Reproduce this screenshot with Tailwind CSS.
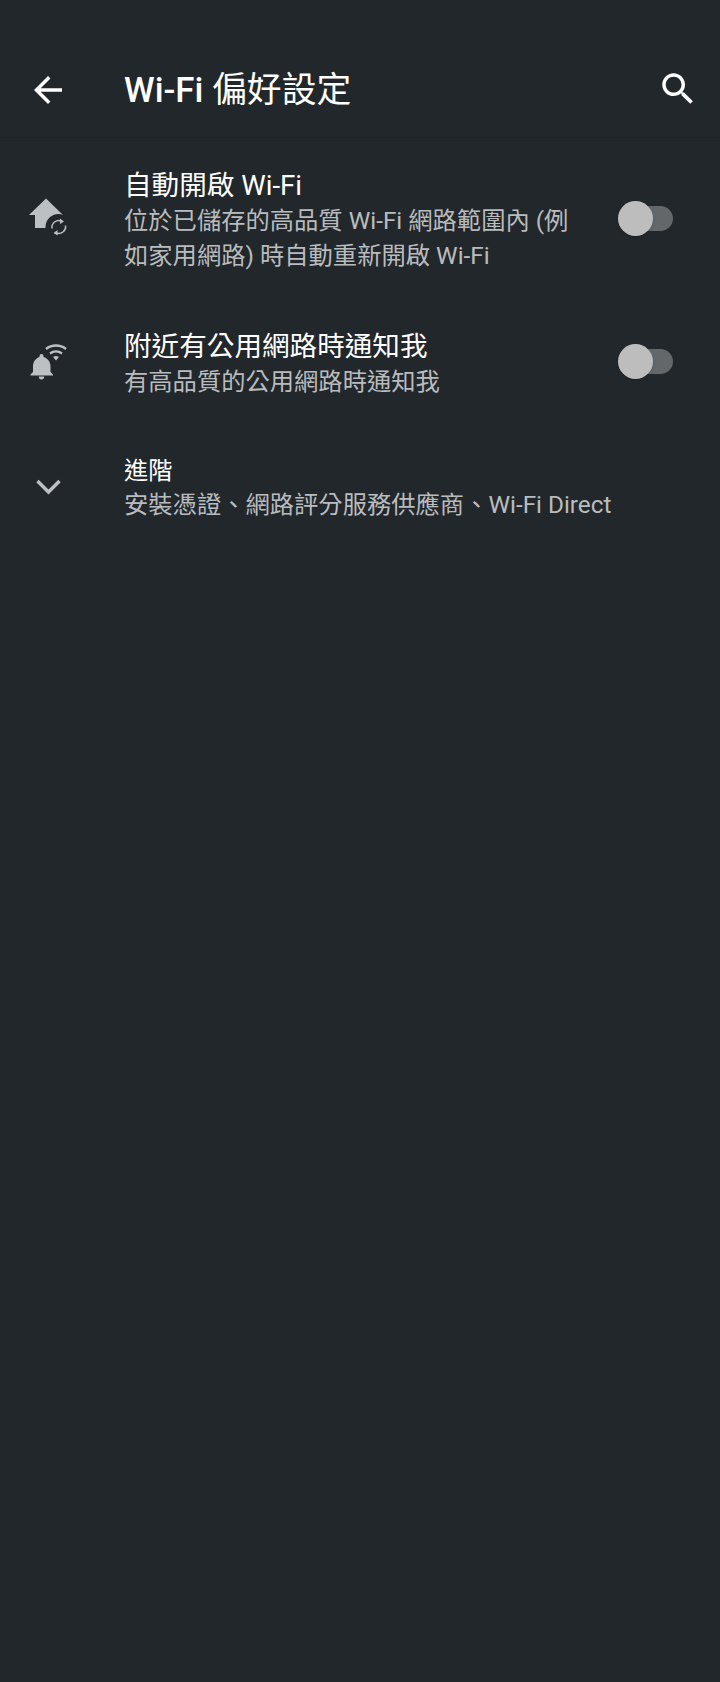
<!DOCTYPE html>
<html lang="zh-Hant">
<head>
<meta charset="utf-8">
<script src="https://cdn.jsdelivr.net/npm/@tailwindcss/browser@4"></script>
</head>
<body class="m-0">
<div class="w-[720px] h-[1682px] overflow-hidden bg-[#22272b] font-['Roboto','Noto_Sans_CJK_TC',sans-serif]">
  <header class="pt-[40px]">
    <div class="h-[98px] flex items-center border-b border-[#1f2427]">
      <div class="w-[124px] shrink-0 pl-[27px] mt-[2px]">
        <svg class="w-[42px] h-[42px] block" viewBox="0 0 24 24" fill="#fff"><path d="M20 11H7.83l5.59-5.59L12 4l-8 8 8 8 1.41-1.41L7.83 13H20v-2z"/></svg>
      </div>
      <h1 class="flex-1 text-[34.8px] leading-[44px] font-medium text-white whitespace-nowrap mt-[3px]"><span class="font-medium">Wi-Fi</span> <span class="font-normal">偏好設定</span></h1>
      <div class="w-[42px] mr-[21px] shrink-0">
        <svg class="w-[42px] h-[42px] block" viewBox="0 0 24 24" fill="#fff"><path d="M15.5 14h-.79l-.28-.27C15.41 12.59 16 11.11 16 9.5 16 5.91 13.09 3 9.5 3S3 5.91 3 9.5 5.91 16 9.5 16c1.61 0 3.09-.59 4.23-1.57l.27.28v.79l5 4.99L20.49 19l-4.99-5zm-6 0C7.01 14 5 11.99 5 9.5S7.01 5 9.5 5 14 7.01 14 9.5 11.99 14 9.5 14z"/></svg>
      </div>
    </div>
  </header>

  <main>
    <div class="flex items-center pt-[30px] pb-[24px]">
      <div class="w-[124px] shrink-0 pl-[20px] -mt-[6px]">
        <svg class="w-[60px] h-[60px] block" viewBox="0 0 60 60">
          <path d="M26 10.500 L9 27 H15 V40 H33 V27 H43 Z" fill="#bdc0c2"/>
          <circle cx="38.500" cy="39" r="13" fill="#22272b"/>
          <g transform="translate(0.500 -3)">
            <path d="M31.500 43.500 A7 7 0 0 1 41 36 M45 40.500 A7 7 0 0 1 35.500 48" fill="none" stroke="#bdc0c2" stroke-width="1.500"/>
            <path d="M39.500 33.500 L43.500 36.500 L39.500 39 Z M37 45 L33 48 L37 50.500 Z" fill="#bdc0c2"/>
          </g>
        </svg>
      </div>
      <div class="w-[453px] shrink-0">
        <div class="text-[27.6px] leading-[35px] text-white">自動開啟 Wi-Fi</div>
        <div class="text-[24.3px] leading-[35px] text-[#b9bcbe]">位於已儲存的高品質 Wi-Fi 網路範圍內 (例如家用網路) 時自動重新開啟 Wi-Fi</div>
      </div>
      <div class="relative ml-[41px] w-[55px] h-[35px] shrink-0 -mt-[5px]">
        <div class="absolute right-0 top-[5px] w-[52px] h-[25px] rounded-full bg-[#63676a]"></div>
        <div class="absolute left-0 top-0 w-[35px] h-[35px] rounded-full bg-[#bdbdbd] shadow-sm"></div>
      </div>
    </div>

    <div class="flex items-center pt-[32px] pb-[27px]">
      <div class="w-[124px] shrink-0 pl-[20px]">
        <svg class="w-[60px] h-[60px] block" viewBox="0 0 60 60">
          <path d="M21.500 20 a2 2 0 0 1 2 2 v1 c4.500 1.300 7 5 7 9.500 v5.500 l2.500 2.500 v1 H10.500 v-1 l2.500-2.500 v-5.500 c0-4.500 2.500-8.200 6.500-9.500 v-1 a2 2 0 0 1 2-2z" fill="#bdc0c2"/>
          <path d="M18.800 42.500 h5.400 a2.700 2.900 0 0 1-5.400 0z" fill="#bdc0c2"/>
          <path d="M26 15 A16 16 0 0 1 46 15 M30 19.500 A10 10 0 0 1 42 19.500" fill="none" stroke="#bdc0c2" stroke-width="2.300"/>
          <path d="M33 23 A5 5 0 0 1 39 23 L36 26.500 Z" fill="#bdc0c2"/>
        </svg>
      </div>
      <div class="w-[453px] shrink-0">
        <div class="text-[27.6px] leading-[35px] text-white">附近有公用網路時通知我</div>
        <div class="text-[24.3px] leading-[35px] text-[#b9bcbe]">有高品質的公用網路時通知我</div>
      </div>
      <div class="relative ml-[41px] w-[55px] h-[35px] shrink-0 -mt-[5px]">
        <div class="absolute right-0 top-[5px] w-[52px] h-[25px] rounded-full bg-[#63676a]"></div>
        <div class="absolute left-0 top-0 w-[35px] h-[35px] rounded-full bg-[#bdbdbd] shadow-sm"></div>
      </div>
    </div>

    <div class="flex items-center pt-[27px]">
      <div class="w-[124px] shrink-0 pl-[27px] -mt-[4px]">
        <svg class="w-[42px] h-[42px] block" viewBox="0 0 42 42" fill="none" stroke="#bdc0c2" stroke-width="3.500"><path d="M10.500 16 L21.500 27 L32.500 16"/></svg>
      </div>
      <div class="min-w-0">
        <div class="text-[24.3px] leading-[35px] text-white">進階</div>
        <div class="text-[24.3px] leading-[35px] -mt-[1px] text-[#b9bcbe] whitespace-nowrap">安裝憑證、網路評分服務供應商、Wi-Fi Direct</div>
      </div>
    </div>
  </main>
</div>
</body>
</html>
